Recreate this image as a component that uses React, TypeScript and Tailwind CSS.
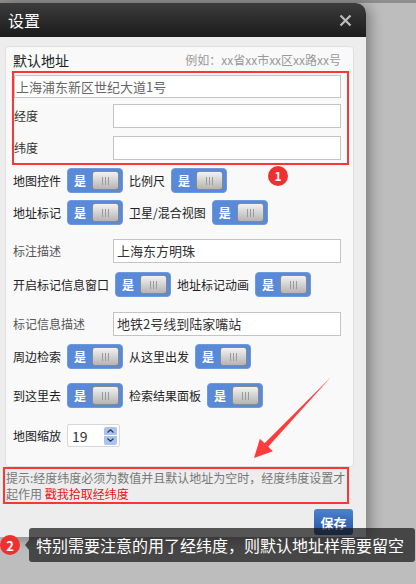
import React from "react";

const font = "font-['Noto_Sans_CJK_SC','Noto_Sans',sans-serif]";

const Toggle = () => (
  <div className="flex h-[25px] w-[56px] shrink-0 items-center justify-between rounded-[4px] border border-[#6e9be0] bg-[#5a89d7] pl-[6px] pr-[3px]">
    <span className="text-[12px] font-bold leading-none text-white">是</span>
    <div className="flex h-[19px] w-[27px] items-center justify-center gap-[2px] rounded-[3px] border border-[#8a8a8a] bg-gradient-to-b from-[#f2f2f2] to-[#b5b5b5]">
      <span className="h-[8px] w-px bg-[#9a9a9a]" />
      <span className="h-[8px] w-px bg-[#9a9a9a]" />
      <span className="h-[8px] w-px bg-[#9a9a9a]" />
    </div>
  </div>
);

const SwitchRow = ({ items, mt }: { items: string[]; mt: string }) => (
  <div className={`flex h-[25px] items-center gap-[6px] pl-[1px] ${mt}`}>
    {items.map((label) => (
      <React.Fragment key={label}>
        <span className="text-[12px] leading-none text-[#222]">{label}</span>
        <Toggle />
      </React.Fragment>
    ))}
  </div>
);

const TextRow = ({ label, value, mt }: { label: string; value: string; mt: string }) => (
  <div className={`flex h-[24px] items-center pl-[1px] ${mt}`}>
    <span className="w-[100px] text-[12px] leading-none text-[#555]">{label}</span>
    <div className="flex h-[24px] w-[228px] items-center border border-[#c4c4c4] bg-white px-[3px] text-[13px] text-[#333]">
      {value}
    </div>
  </div>
);

export default function App() {
  return (
    <div className={`relative h-[584px] w-[416px] overflow-hidden bg-[#bdbdbd] ${font}`}>
      <div className="h-[3px] bg-[#8e8e8e]" />
      <div className="w-[366px] rounded-tr-[10px] bg-[#ededed] pb-[2px] shadow-[4px_2px_14px_rgba(0,0,0,0.35)]">
        {/* title bar */}
        <div className="flex h-[34px] items-center justify-between rounded-tr-[10px] bg-gradient-to-b from-[#3c3c3c] to-[#1c1c1c] pl-[8px] pr-[14px]">
          <span className="text-[16px] leading-none text-white">设置</span>
          <svg width="13" height="13" viewBox="0 0 13 13">
            <path d="M1.5 1.5 L11.5 11.5 M11.5 1.5 L1.5 11.5" stroke="#bdbdbd" strokeWidth="2.2" />
          </svg>
        </div>

        <div className="px-[3px] pt-[9px]">
          {/* panel */}
          <div className="ml-[2px] w-[349px] rounded-[4px] border border-[#e0e0e0] bg-[#f9f9f9] pb-[19px] pl-[6px] pr-[4px] pt-[2px]">
            <div className="flex h-[22px] items-center justify-between pl-[1px] pr-[8px]">
              <span className="text-[14px] leading-none text-[#222]">默认地址</span>
              <span className="text-[12px] leading-none text-[#999]">例如：xx省xx市xx区xx路xx号</span>
            </div>

            <div className="relative w-[337px] border-2 border-[#ff3535] pb-[3px] pr-[6px] pt-[2px]">
              <div className="flex h-[23px] items-center border border-[#c4c4c4] bg-white px-px text-[13px] text-[#666]">
                上海浦东新区世纪大道1号
              </div>
              <div className="mt-[6px] flex h-[24px] items-center">
                <span className="w-[99px] text-[12px] leading-none text-[#333]">经度</span>
                <div className="h-[24px] flex-1 border border-[#c4c4c4] bg-white" />
              </div>
              <div className="mt-[8px] flex h-[24px] items-center">
                <span className="w-[99px] text-[12px] leading-none text-[#333]">纬度</span>
                <div className="h-[24px] flex-1 border border-[#c4c4c4] bg-white" />
              </div>
              <div className="absolute left-[254px] top-[93px] flex h-[20px] w-[20px] items-center justify-center rounded-full bg-[#ee3030] text-[12px] font-bold leading-none text-white">
                1
              </div>
            </div>

            <SwitchRow items={["地图控件", "比例尺"]} mt="mt-[3px]" />
            <SwitchRow items={["地址标记", "卫星/混合视图"]} mt="mt-[7px]" />
            <TextRow label="标注描述" value="上海东方明珠" mt="mt-[14px]" />
            <SwitchRow items={["开启标记信息窗口", "地址标记动画"]} mt="mt-[9px]" />
            <TextRow label="标记信息描述" value="地铁2号线到陆家嘴站" mt="mt-[15px]" />
            <SwitchRow items={["周边检索", "从这里出发"]} mt="mt-[8px]" />
            <SwitchRow items={["到这里去", "检索结果面板"]} mt="mt-[14px]" />

            <div className="mt-[16px] flex h-[23px] items-center gap-[6px] pl-[1px]">
              <span className="text-[12px] leading-none text-[#222]">地图缩放</span>
              <div className="flex h-[23px] w-[53px] items-center justify-between rounded-[2px] border border-[#d8d8d8] bg-white pl-[4px] pr-[2px]">
                <span className="text-[14px] leading-none text-[#333]">19</span>
                <div className="flex h-[18px] w-[13px] flex-col gap-px">
                  <div className="flex flex-1 items-center justify-center rounded-t-[2px] bg-[#a9c3f0]">
                    <svg width="7" height="4" viewBox="0 0 7 4">
                      <path d="M0.5 3.5 L3.5 0.8 L6.5 3.5" fill="none" stroke="#334" strokeWidth="1.2" />
                    </svg>
                  </div>
                  <div className="flex flex-1 items-center justify-center rounded-b-[2px] bg-[#a9c3f0]">
                    <svg width="7" height="4" viewBox="0 0 7 4">
                      <path d="M0.5 0.5 L3.5 3.2 L6.5 0.5" fill="none" stroke="#334" strokeWidth="1.2" />
                    </svg>
                  </div>
                </div>
              </div>
            </div>
          </div>

          {/* hint */}
          <div className="w-[346px] border-2 border-[#ff3535] pb-[1px] pl-px pt-[1px] text-[12px] leading-[15.5px] whitespace-nowrap text-[#777]">
            提示:经度纬度必须为数值并且默认地址为空时，经度纬度设置才
            <br />
            起作用 <span className="text-[#ee1111]">戳我拾取经纬度</span>
          </div>

          <div className="mt-[5px] flex justify-end pr-[10px]">
            <div className="flex h-[26px] w-[39px] items-center justify-center rounded-[3px] bg-gradient-to-b from-[#4d82d2] to-[#22539e] text-[13px] font-bold leading-none text-white">
              保存
            </div>
          </div>
        </div>
      </div>

      {/* annotation arrow */}
      <svg className="absolute left-0 top-0" width="416" height="584" viewBox="0 0 416 584">
        <polygon
          points="331,377 268.2,446.7 272.9,451.2 254,458 259.9,438.8 264.6,443.3"
          fill="#ff3b3b"
        />
      </svg>

      {/* tooltip */}
      <div className="absolute left-0 top-[528px] flex items-center">
        <div className="flex h-[20px] w-[20px] items-center justify-center rounded-full bg-[#ee3030] text-[13px] font-bold leading-none text-white">
          2
        </div>
        <div className="ml-[5px] h-0 w-0 border-y-[5px] border-r-[4px] border-y-transparent border-r-[rgba(20,20,20,0.7)]" />
        <div className="flex h-[34px] w-[386px] items-center rounded-[3px] bg-[rgba(20,20,20,0.7)] pl-[7px] text-[16px] leading-none text-white">
          特别需要注意的用了经纬度，则默认地址样需要留空
        </div>
      </div>
    </div>
  );
}
